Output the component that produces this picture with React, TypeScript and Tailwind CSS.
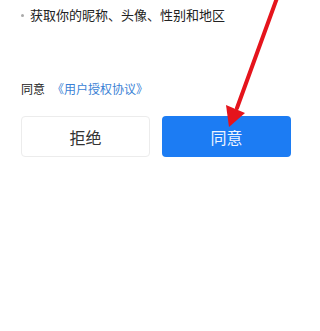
export default function App() {
    return (
        <div className="relative w-[320px] h-[331px] bg-white overflow-hidden font-['Noto_Sans_CJK_SC',sans-serif]">
            <div className="px-[21px] pt-[5px]">
                <div className="flex items-center h-[20px] text-[13px] text-[#222]">
                    <span className="w-[3px] h-[3px] rounded-full bg-[#aaa] mr-[6px]"></span>
                    <span>获取你的昵称、头像、性别和地区</span>
                </div>
                <div className="mt-[55px] flex items-center h-[18px] text-[12px]">
                    <span className="text-[#222]">同意</span>
                    <span className="ml-[7px] text-[#3a7fd5]">《用户授权协议》</span>
                </div>
                <div className="mt-[18px] flex gap-[12px]">
                    <button className="w-[129px] h-[41px] rounded-[4px] border border-[#ececec] bg-white text-[16px] text-[#333]">
                        拒绝
                    </button>
                    <button className="w-[129px] h-[41px] rounded-[4px] bg-[#1c7cf3] text-[16px] text-[#eef4ff]">
                        同意
                    </button>
                </div>
            </div>
            <svg className="absolute left-0 top-0" width="320" height="331" viewBox="0 0 320 331">
                <line x1="277" y1="-2" x2="237" y2="108" stroke="#e5141c" strokeWidth="4" strokeLinecap="round" />
                <polygon points="226,105 245,113 229,127" fill="#e5141c" />
            </svg>
        </div>
    );
}
